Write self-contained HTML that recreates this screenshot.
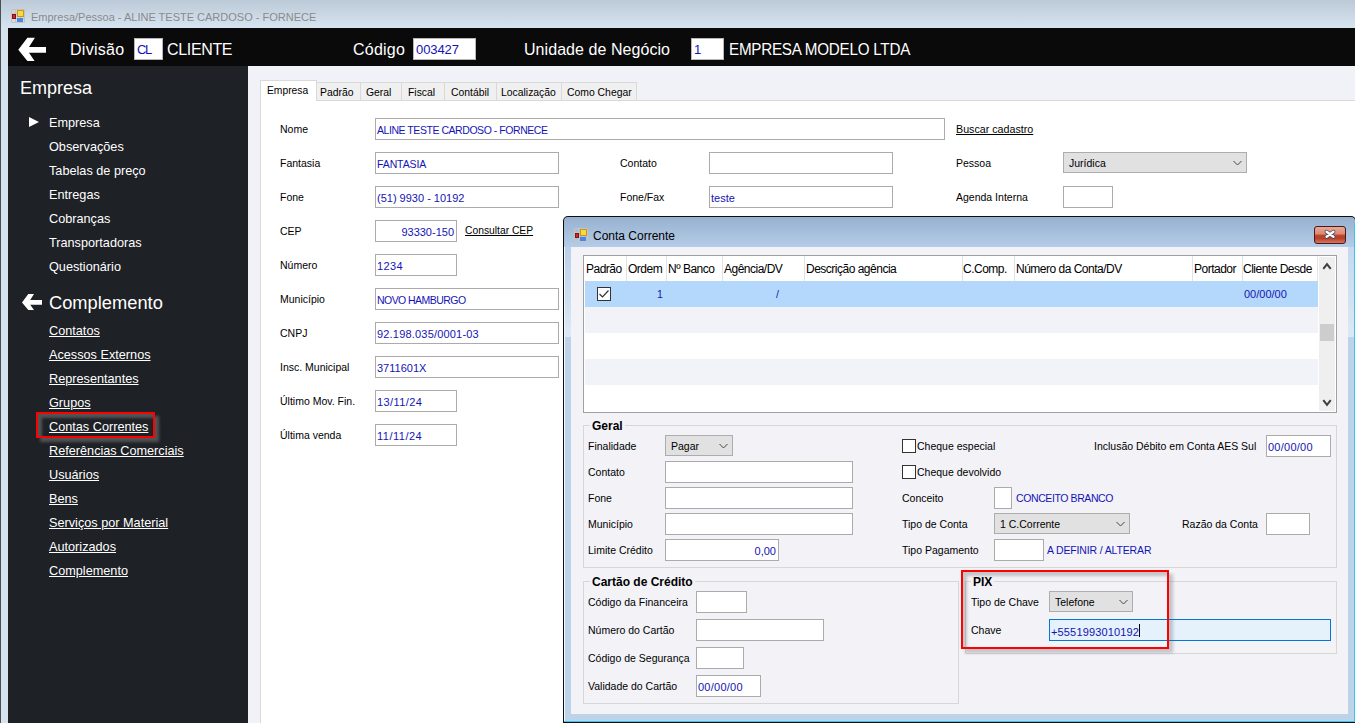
<!DOCTYPE html>
<html><head><meta charset="utf-8">
<style>
*{box-sizing:border-box;margin:0;padding:0}
html,body{width:1355px;height:723px;overflow:hidden}
body{position:relative;font-family:"Liberation Sans",sans-serif;font-size:11px;color:#000;background:#d4dfea}
.a{position:absolute}
.t{position:absolute;white-space:nowrap;line-height:14px}
.lbl{position:absolute;white-space:nowrap;font-size:10.5px;line-height:14px;color:#000}
.inp{position:absolute;background:#fff;border:1px solid #ababab;color:#1414b4;font-size:10.5px;line-height:14px;padding:4px 0 0 1px;white-space:nowrap;overflow:hidden}
.cmb{position:absolute;background:#e1e1e1;border:1px solid #adadad;font-size:10.5px;line-height:14px;padding:3px 0 0 5px;white-space:nowrap}
.cmb svg{position:absolute;right:4px;top:7px}
.side{font-size:12.7px;color:#fff;line-height:16px}
.u{text-decoration:underline}
.g{font-size:12px;letter-spacing:-0.5px}
.v{color:#1414b4;font-size:10.5px}
.grp{position:absolute;border:1px solid #d7d7d7}
.gt{position:absolute;font-weight:bold;font-size:12px;line-height:14px;background:#f2f2f7;padding:0 2px;white-space:nowrap}
</style></head><body>
<!-- window frame -->
<div class="a" style="left:0;top:0;width:1355px;height:28px;background:linear-gradient(#bccad8,#d6e4f1)"></div>
<div class="a" style="left:0;top:0;width:1px;height:723px;background:#4a4f55"></div>
<div class="a" style="left:1px;top:28px;width:7px;height:695px;background:#d6e2ee"></div>
<!-- title icon -->
<svg class="a" style="left:11px;top:9px" width="14" height="14" viewBox="0 0 14 14">
<path d="M0.5,0.5 H13.5 V13.5 H0.5 Z M0.5,4.5 H13.5 M0.5,9.5 H13.5 M4.5,0.5 V13.5 M9.5,0.5 V13.5" fill="none" stroke="#c9c3bd" stroke-width="1"/>
<rect x="1.5" y="5.5" width="3" height="4" fill="#d02a22" stroke="#8a1010" stroke-width="1"/>
<rect x="6.5" y="1.5" width="6" height="6" fill="#fad748" stroke="#c49a1a" stroke-width="1"/>
<rect x="6" y="9" width="6" height="4" fill="#4d86e0"/>
</svg>
<div class="t" style="left:31px;top:10px;font-size:11px;color:#8a8a8a">Empresa/Pessoa - ALINE TESTE CARDOSO - FORNECE</div>

<!-- header -->
<div class="a" style="left:8px;top:28px;width:1347px;height:38px;background:#0a0a0a"></div>
<svg class="a" style="left:8px;top:28px" width="50" height="38" viewBox="0 0 50 38">
<path d="M10.3,21.8 L19.4,9.8 L26.9,9.8 L21,19 L38,19 L38,24.8 L21,24.8 L26.6,33 L19.4,33 Z" fill="#fff"/>
</svg>
<div class="t" style="left:70px;top:40px;font-size:16px;letter-spacing:0.29px;line-height:20px;color:#fff">Divisão</div>
<div class="a" style="left:134px;top:38px;width:29px;height:22px;background:#fff;border:1px solid #b8b8b8"></div>
<div class="t" style="left:137px;top:43px;font-size:13px;letter-spacing:-1.4px;color:#1414b4">CL</div>
<div class="t" style="left:167px;top:40px;font-size:16px;letter-spacing:-0.34px;line-height:20px;color:#fff">CLIENTE</div>
<div class="t" style="left:353px;top:40px;font-size:16px;letter-spacing:0.24px;line-height:20px;color:#fff">Código</div>
<div class="a" style="left:413px;top:38px;width:63px;height:22px;background:#fff;border:1px solid #b8b8b8"></div>
<div class="t" style="left:416px;top:43px;font-size:13px;letter-spacing:-0.1px;color:#1414b4">003427</div>
<div class="t" style="left:524px;top:40px;font-size:16px;letter-spacing:0.06px;line-height:20px;color:#fff">Unidade de Negócio</div>
<div class="a" style="left:691px;top:38px;width:33px;height:22px;background:#fff;border:1px solid #b8b8b8"></div>
<div class="t" style="left:694px;top:43px;font-size:13px;color:#1414b4">1</div>
<div class="t" style="left:729px;top:40px;font-size:16px;letter-spacing:-0.25px;word-spacing:0px;transform:scaleX(0.95);transform-origin:0 0;line-height:20px;color:#fff">EMPRESA MODELO LTDA</div>

<!-- sidebar -->
<div class="a" style="left:8px;top:66px;width:240px;height:657px;background:#1e2125"></div>
<div class="t side" style="left:20px;top:77px;font-size:18px;line-height:22px">Empresa</div>
<svg class="a" style="left:29px;top:117px" width="11" height="11" viewBox="0 0 11 11"><path d="M0,0 L10,5 L0,10 Z" fill="#fff"/></svg>
<div class="t side" style="left:49px;top:115px">Empresa</div>
<div class="t side" style="left:49px;top:139px">Observações</div>
<div class="t side" style="left:49px;top:163px">Tabelas de preço</div>
<div class="t side" style="left:49px;top:187px">Entregas</div>
<div class="t side" style="left:49px;top:211px">Cobranças</div>
<div class="t side" style="left:49px;top:235px">Transportadoras</div>
<div class="t side" style="left:49px;top:259px">Questionário</div>
<svg class="a" style="left:21px;top:293px" width="22" height="18" viewBox="0 0 22 18"><path d="M1,9.4 L7.3,1 L13,1 L9.2,7 L21,7 L21,11.8 L9.2,11.8 L13,17 L7.3,17 Z" fill="#fff"/></svg>
<div class="t side" style="left:49px;top:292px;font-size:18.3px;line-height:22px">Complemento</div>
<div class="t side u" style="left:49px;top:323px">Contatos</div>
<div class="t side u" style="left:49px;top:347px">Acessos Externos</div>
<div class="t side u" style="left:49px;top:371px">Representantes</div>
<div class="t side u" style="left:49px;top:395px">Grupos</div>
<div class="t side u" style="left:49px;top:419px">Contas Correntes</div>
<div class="t side u" style="left:49px;top:443px">Referências Comerciais</div>
<div class="t side u" style="left:49px;top:467px">Usuários</div>
<div class="t side u" style="left:49px;top:491px">Bens</div>
<div class="t side u" style="left:49px;top:515px">Serviços por Material</div>
<div class="t side u" style="left:49px;top:539px">Autorizados</div>
<div class="t side u" style="left:49px;top:563px">Complemento</div>
<div class="a" style="left:36px;top:412px;width:119px;height:26px;border:2px solid #ff0000;box-shadow:4px 4px 3px rgba(125,125,125,.55),inset 4px 4px 3px rgba(125,125,125,.55)"></div>

<!-- content -->
<div class="a" style="left:248px;top:66px;width:1107px;height:657px;background:#f0f2f7"></div>
<div class="a" style="left:260px;top:100px;width:1100px;height:630px;background:#fff;border:1px solid #d9d9d9"></div>
<!-- tabs -->
<div class="a" style="left:316px;top:82px;width:321px;height:18px;background:#f0f0f0;border:1px solid #d9d9d9;border-bottom:none"></div>
<div class="a" style="left:260px;top:80px;width:57px;height:21px;background:#fff;border:1px solid #d9d9d9;border-bottom:none"></div>
<div class="t" style="left:267px;top:84px;font-size:10.3px">Empresa</div>
<div class="a" style="left:360px;top:83px;width:1px;height:17px;background:#d9d9d9"></div>
<div class="a" style="left:401px;top:83px;width:1px;height:17px;background:#d9d9d9"></div>
<div class="a" style="left:444px;top:83px;width:1px;height:17px;background:#d9d9d9"></div>
<div class="a" style="left:496px;top:83px;width:1px;height:17px;background:#d9d9d9"></div>
<div class="a" style="left:561px;top:83px;width:1px;height:17px;background:#d9d9d9"></div>
<div class="t" style="left:320px;top:86px;font-size:10.4px">Padrão</div>
<div class="t" style="left:366px;top:86px;font-size:10.4px">Geral</div>
<div class="t" style="left:408px;top:86px;font-size:10.4px">Fiscal</div>
<div class="t" style="left:451px;top:86px;font-size:10.4px">Contábil</div>
<div class="t" style="left:501px;top:86px;font-size:10.4px">Localização</div>
<div class="t" style="left:567px;top:86px;font-size:10.4px">Como Chegar</div>

<!-- form -->
<div class="lbl" style="left:280px;top:122px">Nome</div>
<div class="inp" style="left:375px;top:118px;width:570px;height:22px;letter-spacing:-0.45px">ALINE TESTE CARDOSO - FORNECE</div>
<div class="t u" style="left:956px;top:122px;font-size:10.7px">Buscar cadastro</div>
<div class="lbl" style="left:280px;top:156px">Fantasia</div>
<div class="inp" style="left:375px;top:152px;width:184px;height:22px;letter-spacing:-0.1px">FANTASIA</div>
<div class="lbl" style="left:620px;top:156px">Contato</div>
<div class="inp" style="left:709px;top:152px;width:184px;height:22px"></div>
<div class="lbl" style="left:956px;top:156px">Pessoa</div>
<div class="cmb" style="left:1063px;top:152px;width:184px;height:21px">Jurídica<svg width="9" height="6" viewBox="0 0 9 6"><path d="M0.5,1 L4.5,5 L8.5,1" fill="none" stroke="#444" stroke-width="1"/></svg></div>
<div class="lbl" style="left:280px;top:190px">Fone</div>
<div class="inp" style="left:375px;top:186px;width:184px;height:22px;font-size:11px">(51) 9930 - 10192</div>
<div class="lbl" style="left:620px;top:190px">Fone/Fax</div>
<div class="inp" style="left:709px;top:186px;width:184px;height:22px;font-size:11px">teste</div>
<div class="lbl" style="left:956px;top:190px">Agenda Interna</div>
<div class="inp" style="left:1063px;top:186px;width:50px;height:22px"></div>
<div class="lbl" style="left:280px;top:224px">CEP</div>
<div class="inp" style="left:375px;top:220px;width:82px;height:22px;text-align:right;padding-right:2px;font-size:11px">93330-150</div>
<div class="t u" style="left:465px;top:224px;font-size:10.3px">Consultar CEP</div>
<div class="lbl" style="left:280px;top:258px">Número</div>
<div class="inp" style="left:375px;top:254px;width:82px;height:22px;font-size:11px;letter-spacing:0.4px">1234</div>
<div class="lbl" style="left:280px;top:292px">Município</div>
<div class="inp" style="left:375px;top:288px;width:184px;height:22px;letter-spacing:-0.55px">NOVO HAMBURGO</div>
<div class="lbl" style="left:280px;top:326px">CNPJ</div>
<div class="inp" style="left:375px;top:322px;width:184px;height:22px;font-size:11px;letter-spacing:0.19px">92.198.035/0001-03</div>
<div class="lbl" style="left:280px;top:360px">Insc. Municipal</div>
<div class="inp" style="left:375px;top:356px;width:184px;height:22px;font-size:11px">3711601X</div>
<div class="lbl" style="left:280px;top:394px">Último Mov. Fin.</div>
<div class="inp" style="left:375px;top:390px;width:82px;height:22px;font-size:11px;letter-spacing:0.4px">13/11/24</div>
<div class="lbl" style="left:280px;top:428px">Última venda</div>
<div class="inp" style="left:375px;top:424px;width:82px;height:22px;font-size:11px;letter-spacing:0.5px">11/11/24</div>

<!-- dialog -->
<div class="a" style="left:563px;top:216px;width:793px;height:507px;background:#0f0f0f;border-radius:5px 5px 0 0"></div>
<div class="a" style="left:564px;top:217px;width:791px;height:505px;background:linear-gradient(#97b1cf 0px,#b4cce7 30px,#bcd3ea 31px,#bcd3ea 100%);border-radius:4px 4px 0 0"></div>
<div class="a" style="left:564px;top:247px;width:1px;height:474px;background:#f4f8fc"></div>
<div class="a" style="left:565px;top:247px;width:6px;height:90px;background:linear-gradient(#b9d0ea,#dde9f5)"></div>
<div class="a" style="left:1348px;top:247px;width:6px;height:90px;background:linear-gradient(#c4d8ee,#dce8f4)"></div>
<svg class="a" style="left:574px;top:228px" width="14" height="14" viewBox="0 0 14 14">
<path d="M0.5,0.5 H13.5 V13.5 H0.5 Z M0.5,4.5 H13.5 M0.5,9.5 H13.5 M4.5,0.5 V13.5 M9.5,0.5 V13.5" fill="none" stroke="#c9c3bd" stroke-width="1"/>
<rect x="1.5" y="5.5" width="3" height="4" fill="#d02a22" stroke="#8a1010" stroke-width="1"/>
<rect x="6.5" y="1.5" width="6" height="6" fill="#fad748" stroke="#c49a1a" stroke-width="1"/>
<rect x="6" y="9" width="6" height="4" fill="#4d86e0"/>
</svg>
<div class="t" style="left:593px;top:229px;font-size:12px;line-height:15px;color:#000">Conta Corrente</div>
<div class="a" style="left:1314px;top:226px;width:32px;height:18px;border:1px solid #4a1818;border-radius:3px;background:linear-gradient(#eaa896,#d98873 45%,#c0452c 50%,#b93e26 70%,#d07560)"></div>
<svg class="a" style="left:1322px;top:228px" width="16" height="13" viewBox="0 0 16 13"><path d="M4.6,3.8 L11.4,8.8 M11.4,3.8 L4.6,8.8" stroke="#4a4a5a" stroke-width="4" stroke-linecap="round"/><path d="M4.6,3.8 L11.4,8.8 M11.4,3.8 L4.6,8.8" stroke="#fff" stroke-width="2.4" stroke-linecap="round"/></svg>
<div class="a" style="left:571px;top:247px;width:777px;height:467px;background:#f2f2f7"></div>
<div class="a" style="left:1354px;top:222px;width:1px;height:500px;background:#38c6ee"></div>
<div class="a" style="left:564px;top:721px;width:791px;height:1px;background:#38c6ee"></div>
<div class="a" style="left:564px;top:722px;width:791px;height:1px;background:#111"></div>

<!-- grid -->
<div class="a" style="left:583px;top:255px;width:754px;height:158px;background:#fff;border:1px solid #a0a0a0"></div>
<div class="a" style="left:585px;top:281px;width:733px;height:26px;background:#b4d8fb"></div>
<div class="a" style="left:585px;top:307px;width:733px;height:26px;background:#f2f3f8"></div>
<div class="a" style="left:585px;top:359px;width:733px;height:26px;background:#f2f3f8"></div>
<div class="a" style="left:626px;top:256px;width:1px;height:25px;background:#e2e2e2"></div>
<div class="a" style="left:666px;top:256px;width:1px;height:25px;background:#e2e2e2"></div>
<div class="a" style="left:722px;top:256px;width:1px;height:25px;background:#e2e2e2"></div>
<div class="a" style="left:804px;top:256px;width:1px;height:25px;background:#e2e2e2"></div>
<div class="a" style="left:962px;top:256px;width:1px;height:25px;background:#e2e2e2"></div>
<div class="a" style="left:1014px;top:256px;width:1px;height:25px;background:#e2e2e2"></div>
<div class="a" style="left:1192px;top:256px;width:1px;height:25px;background:#e2e2e2"></div>
<div class="a" style="left:1242px;top:256px;width:1px;height:25px;background:#e2e2e2"></div>
<div class="lbl g" style="left:586px;top:262px">Padrão</div>
<div class="lbl g" style="left:628px;top:262px">Ordem</div>
<div class="lbl g" style="left:668px;top:262px">Nº Banco</div>
<div class="lbl g" style="left:724px;top:262px">Agência/DV</div>
<div class="lbl g" style="left:806px;top:262px">Descrição agência</div>
<div class="lbl g" style="left:963px;top:262px">C.Comp.</div>
<div class="lbl g" style="left:1016px;top:262px">Número da Conta/DV</div>
<div class="lbl g" style="left:1194px;top:262px">Portador</div>
<div class="lbl g" style="left:1243px;top:262px">Cliente Desde</div>
<svg class="a" style="left:597px;top:287px" width="14" height="14" viewBox="0 0 14 14"><rect x="0.5" y="0.5" width="13" height="13" fill="#fff" stroke="#333" stroke-width="1"/><path d="M2.5,7 L5.5,10 L11.5,3.5" fill="none" stroke="#333" stroke-width="1.2"/></svg>
<div class="t v" style="left:657px;top:287px">1</div>
<div class="t v" style="left:776px;top:287px">/</div>
<div class="t v" style="left:1244px;top:287px;font-size:11px">00/00/00</div>
<!-- scrollbar -->
<div class="a" style="left:1317px;top:256px;width:1px;height:25px;background:#e4e4e4"></div>
<div class="a" style="left:1319px;top:257px;width:16px;height:154px;background:#efefef"></div>
<svg class="a" style="left:1322px;top:262px" width="10" height="8" viewBox="0 0 10 8"><path d="M1.3,6.8 L5,2.2 L8.7,6.8" fill="none" stroke="#404040" stroke-width="2.1"/></svg>
<div class="a" style="left:1320px;top:324px;width:14px;height:17px;background:#cdcdcd"></div>
<svg class="a" style="left:1322px;top:399px" width="10" height="8" viewBox="0 0 10 8"><path d="M1.3,1.2 L5,5.8 L8.7,1.2" fill="none" stroke="#404040" stroke-width="2.1"/></svg>

<!-- Geral group -->
<div class="grp" style="left:583px;top:425px;width:754px;height:143px"></div>
<div class="gt" style="left:590px;top:419px">Geral</div>
<div class="lbl" style="left:588px;top:439px">Finalidade</div>
<div class="cmb" style="left:665px;top:435px;width:68px;height:21px">Pagar<svg width="9" height="6" viewBox="0 0 9 6"><path d="M0.5,1 L4.5,5 L8.5,1" fill="none" stroke="#444" stroke-width="1"/></svg></div>
<div class="lbl" style="left:588px;top:465px">Contato</div>
<div class="inp" style="left:665px;top:461px;width:188px;height:22px"></div>
<div class="lbl" style="left:588px;top:491px">Fone</div>
<div class="inp" style="left:665px;top:487px;width:188px;height:22px"></div>
<div class="lbl" style="left:588px;top:517px">Município</div>
<div class="inp" style="left:665px;top:513px;width:188px;height:22px"></div>
<div class="lbl" style="left:588px;top:543px">Limite Crédito</div>
<div class="inp" style="left:665px;top:539px;width:114px;height:22px;text-align:right;padding-right:2px;font-size:11px">0,00</div>
<svg class="a" style="left:902px;top:439px" width="14" height="14" viewBox="0 0 14 14"><rect x="0.5" y="0.5" width="13" height="13" fill="#fff" stroke="#333" stroke-width="1"/></svg>
<div class="lbl" style="left:917px;top:439px">Cheque especial</div>
<svg class="a" style="left:902px;top:465px" width="14" height="14" viewBox="0 0 14 14"><rect x="0.5" y="0.5" width="13" height="13" fill="#fff" stroke="#333" stroke-width="1"/></svg>
<div class="lbl" style="left:917px;top:465px">Cheque devolvido</div>
<div class="lbl" style="left:1094px;top:439px">Inclusão Débito em Conta AES Sul</div>
<div class="inp" style="left:1266px;top:435px;width:65px;height:22px;font-size:11px;letter-spacing:0.25px">00/00/00</div>
<div class="lbl" style="left:902px;top:491px">Conceito</div>
<div class="inp" style="left:994px;top:487px;width:18px;height:22px"></div>
<div class="t v" style="left:1016px;top:491px;letter-spacing:-0.4px">CONCEITO BRANCO</div>
<div class="lbl" style="left:902px;top:517px">Tipo de Conta</div>
<div class="cmb" style="left:994px;top:513px;width:136px;height:21px">1 C.Corrente<svg width="9" height="6" viewBox="0 0 9 6"><path d="M0.5,1 L4.5,5 L8.5,1" fill="none" stroke="#444" stroke-width="1"/></svg></div>
<div class="lbl" style="left:1182px;top:517px">Razão da Conta</div>
<div class="inp" style="left:1266px;top:513px;width:44px;height:22px"></div>
<div class="lbl" style="left:902px;top:543px">Tipo Pagamento</div>
<div class="inp" style="left:994px;top:539px;width:50px;height:22px"></div>
<div class="t v" style="left:1047px;top:543px;letter-spacing:-0.15px">A DEFINIR / ALTERAR</div>

<!-- Cartao group -->
<div class="grp" style="left:583px;top:581px;width:376px;height:123px"></div>
<div class="gt" style="left:590px;top:575px">Cartão de Crédito</div>
<div class="lbl" style="left:588px;top:595px">Código da Financeira</div>
<div class="inp" style="left:696px;top:591px;width:51px;height:22px"></div>
<div class="lbl" style="left:588px;top:623px">Número do Cartão</div>
<div class="inp" style="left:696px;top:619px;width:128px;height:22px"></div>
<div class="lbl" style="left:588px;top:651px">Código de Segurança</div>
<div class="inp" style="left:696px;top:647px;width:48px;height:22px"></div>
<div class="lbl" style="left:588px;top:679px">Validade do Cartão</div>
<div class="inp" style="left:696px;top:675px;width:65px;height:22px;font-size:11px;letter-spacing:0.25px">00/00/00</div>

<!-- PIX group -->
<div class="grp" style="left:965px;top:581px;width:372px;height:73px"></div>
<div class="gt" style="left:971px;top:575px">PIX</div>
<div class="lbl" style="left:971px;top:595px">Tipo de Chave</div>
<div class="cmb" style="left:1049px;top:591px;width:84px;height:21px">Telefone<svg width="9" height="6" viewBox="0 0 9 6"><path d="M0.5,1 L4.5,5 L8.5,1" fill="none" stroke="#444" stroke-width="1"/></svg></div>
<div class="lbl" style="left:971px;top:623px">Chave</div>
<div class="inp" style="left:1049px;top:619px;width:282px;height:22px;background:#e5f1fb;border-color:#0078d7;font-size:11px;letter-spacing:0.15px">+5551993010192<span style="display:inline-block;width:1px;height:13px;background:#000;vertical-align:-1px"></span></div>
<div class="a" style="left:961px;top:570px;width:208px;height:79px;border:2px solid #ff0000;box-shadow:4px 4px 3px rgba(90,90,100,.3),inset 4px 4px 3px rgba(90,90,100,.3)"></div>

</body></html>
